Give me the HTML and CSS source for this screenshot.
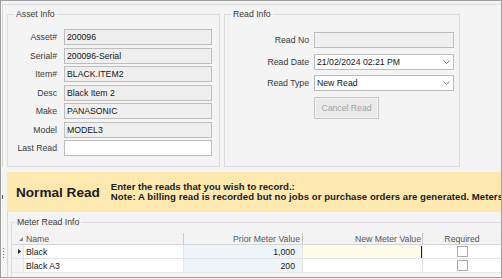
FILE: index.html
```html
<!DOCTYPE html>
<html>
<head>
<meta charset="utf-8">
<title>Meter Read</title>
<link rel="stylesheet" href="styles.css">
</head>
<body>
<div class="window">
  <div class="top">
    <fieldset class="group asset">
      <legend>Asset Info</legend>
      <div class="form asset-form">
        <span class="lbl">Asset#</span><div class="tb ro">200096</div>
        <span class="lbl">Serial#</span><div class="tb ro">200096-Serial</div>
        <span class="lbl">Item#</span><div class="tb ro">BLACK.ITEM2</div>
        <span class="lbl">Desc</span><div class="tb ro">Black Item 2</div>
        <span class="lbl">Make</span><div class="tb ro">PANASONIC</div>
        <span class="lbl">Model</span><div class="tb ro">MODEL3</div>
        <span class="lbl">Last Read</span><div class="tb"></div>
      </div>
    </fieldset>
    <fieldset class="group read">
      <legend>Read Info</legend>
      <div class="form read-form">
        <span class="lbl">Read No</span><div class="tb ro"></div>
        <span class="lbl">Read Date</span>
        <div class="tb combo"><span>21/02/2024 02:21 PM</span><svg class="chev" viewBox="0 0 7 4"><polyline points="0.5,0.5 3.5,3.5 6.5,0.5" fill="none" stroke="#7a7a7a" stroke-width="1"/></svg></div>
        <span class="lbl">Read Type</span>
        <div class="tb combo"><span>New Read</span><svg class="chev" viewBox="0 0 7 4"><polyline points="0.5,0.5 3.5,3.5 6.5,0.5" fill="none" stroke="#7a7a7a" stroke-width="1"/></svg></div>
        <span></span><button class="btn" disabled>Cancel Read</button>
      </div>
    </fieldset>
  </div>
  <div class="mid">
    <div class="strip"><i class="mark"></i></div>
    <div class="banner">
      <span class="banner-title">Normal Read</span>
      <div class="banner-text">
        <div>Enter the reads that you wish to record.:</div>
        <div class="note">Note: A billing read is recorded but no jobs or purchase orders are generated. Meters are updated.</div>
      </div>
    </div>
  </div>
  <div class="bottom">
    <div class="strip bstrip"><i class="dots"></i></div>
    <fieldset class="group meter">
      <legend>Meter Read Info</legend>
      <div class="grid">
        <div class="hd ind"><svg class="sort" viewBox="0 0 4 4"><polygon points="4,0 4,4 0,4" fill="#8a8a8a"/></svg></div>
        <div class="hd name">Name</div>
        <div class="hd num">Prior Meter Value</div>
        <div class="hd num new">New Meter Value</div>
        <div class="hd center">Required</div>

        <div class="cell ind"><svg class="arrow" viewBox="0 0 3 5"><polygon points="0,0 3,2.5 0,5" fill="#222"/></svg></div>
        <div class="cell name">Black</div>
        <div class="cell num prior">1,000</div>
        <div class="cell num edit"><i class="caret"></i></div>
        <div class="cell center"><span class="chk"></span></div>

        <div class="cell ind"></div>
        <div class="cell name">Black A3</div>
        <div class="cell num prior">200</div>
        <div class="cell num"></div>
        <div class="cell center"><span class="chk"></span></div>
      </div>
    </fieldset>
  </div>
</div>
</body>
</html>
```

FILE: styles.css
```css
* { box-sizing: border-box; }
html, body { margin: 0; padding: 0; }
body {
  width: 502px;
  height: 279px;
  overflow: hidden;
  background: #f6f6f6;
  font-family: "Liberation Sans", Arial, sans-serif;
  font-size: 8.7px;
  color: #222;
}
.window {
  width: 502px;
  height: 278px;
  border: 1px solid #9e9e9e;
  background: #f4f4f4;
  display: flex;
  flex-direction: column;
  overflow: hidden;
}
.top {
  margin: 3px 0 0 1px;
  border-top: 1px solid #dddddd;
  border-left: 1px solid #dddddd;
  padding: 3px 0 0 4px;
  display: flex;
  gap: 4px;
  align-items: stretch;
  flex: none;
}
.group {
  margin: 0;
  border: 1px solid #dcdcdc;
  min-width: 0;
}
legend {
  padding: 0 2px;
  margin-left: 6px;
  line-height: 12px;
  color: #3a3a3a;
}
.asset { width: 213px; padding: 9px 7px 10px 0; }
.read { width: 236px; padding: 12px 5px 10px 0; }
.form { display: grid; align-items: center; }
.asset-form { grid-template-columns: 49px 148px; column-gap: 7px; row-gap: 2.5px; }
.read-form { grid-template-columns: 84px 140px; column-gap: 5px; row-gap: 5.5px; }
.lbl { text-align: right; color: #3a3a3a; white-space: nowrap; }
.tb {
  height: 16px;
  border: 1px solid #bdbdbd;
  background: #ffffff;
  padding: 0 2px;
  display: flex;
  align-items: center;
  color: #151515;
  white-space: nowrap;
  overflow: hidden;
}
.tb.ro { background: #efefef; }
.combo { justify-content: space-between; padding-right: 3px; }
.chev { width: 7px; height: 4px; display: block; }
.btn {
  justify-self: start;
  width: 65px;
  height: 22px;
  border: 1px solid #c4c4c4;
  box-shadow: inset 0 0 0 1px #f6f6f6;
  background: #eaeaea;
  color: #a2a2a2;
  font-family: inherit;
  font-size: 8.7px;
  padding: 0;
}

.mid {
  margin-top: 5px;
  height: 40px;
  display: flex;
  flex: none;
}
.strip { width: 6px; flex: none; display: flex; flex-direction: column; }
.mark { display: block; width: 1px; height: 4px; margin: 23px 0 0 1px; background: #555; }
.banner {
  flex: 1;
  min-width: 0;
  background: #fde8b0;
  display: flex;
  align-items: center;
  padding-left: 9px;
  overflow: hidden;
  white-space: nowrap;
}
.banner-title {
  font-weight: bold;
  font-size: 13.6px;
  color: #1c1c1c;
  flex: none;
}
.banner-text {
  margin-left: 11px;
  font-weight: bold;
  font-size: 9.6px;
  line-height: 10.5px;
  color: #1c1c1c;
  flex: none;
}
.note { letter-spacing: 0.05px; }

.bottom {
  flex: 1;
  display: flex;
  min-height: 0;
}
.bstrip { width: 7px; border-right: 1px solid #d8d8d8; padding: 36px 0 0 2px; }
.dots {
  display: block;
  width: 1px;
  height: 11px;
  background: repeating-linear-gradient(#6a6a6a 0 1px, transparent 1px 3px);
}
.group.meter {
  flex: 1;
  min-width: 0;
  margin: 4px 0 0 3px;
  padding: 5px 0 0 0;
  border-right: none;
  border-bottom: none;
  overflow: hidden;
}
.meter legend { margin-left: 3px; }
.grid {
  display: grid;
  grid-template-columns: 12px 160px 119px 120px 1fr;
  grid-template-rows: 12px 14px 14px;
}
.hd {
  background: #f3f3f3;
  color: #555;
  border-right: 1px solid #c9c9c9;
  border-bottom: 1px solid #d6d6d6;
  display: flex;
  align-items: center;
  white-space: nowrap;
  overflow: hidden;
}
.hd.ind { border-right: none; padding-left: 7px; }
.sort { width: 4px; height: 4px; display: block; }
.hd.name { padding-left: 2px; }
.hd.num { justify-content: flex-end; padding-right: 2px; }
.hd.num.new { padding-right: 1px; }
.hd.center { justify-content: center; border-right: none; }
.cell {
  background: #ffffff;
  border-right: 1px solid #e4e4e4;
  border-bottom: 1px solid #e4e4e4;
  display: flex;
  align-items: center;
  color: #151515;
  white-space: nowrap;
  overflow: hidden;
}
.cell.ind { background: #f4f4f4; padding-left: 6px; }
.arrow { width: 3px; height: 5px; display: block; }
.cell.name { padding-left: 2px; }
.cell.num { justify-content: flex-end; padding-right: 7px; }
.cell.prior { background: #eef5f9; }
.cell.edit { background: #fffcea; padding-right: 0; }
.caret { display: block; width: 1px; height: 12px; background: #222; }
.cell.center { justify-content: center; border-right: none; }
.chk {
  display: block;
  width: 11px;
  height: 11px;
  border: 1px solid #ababab;
  background: #fff;
}
```
